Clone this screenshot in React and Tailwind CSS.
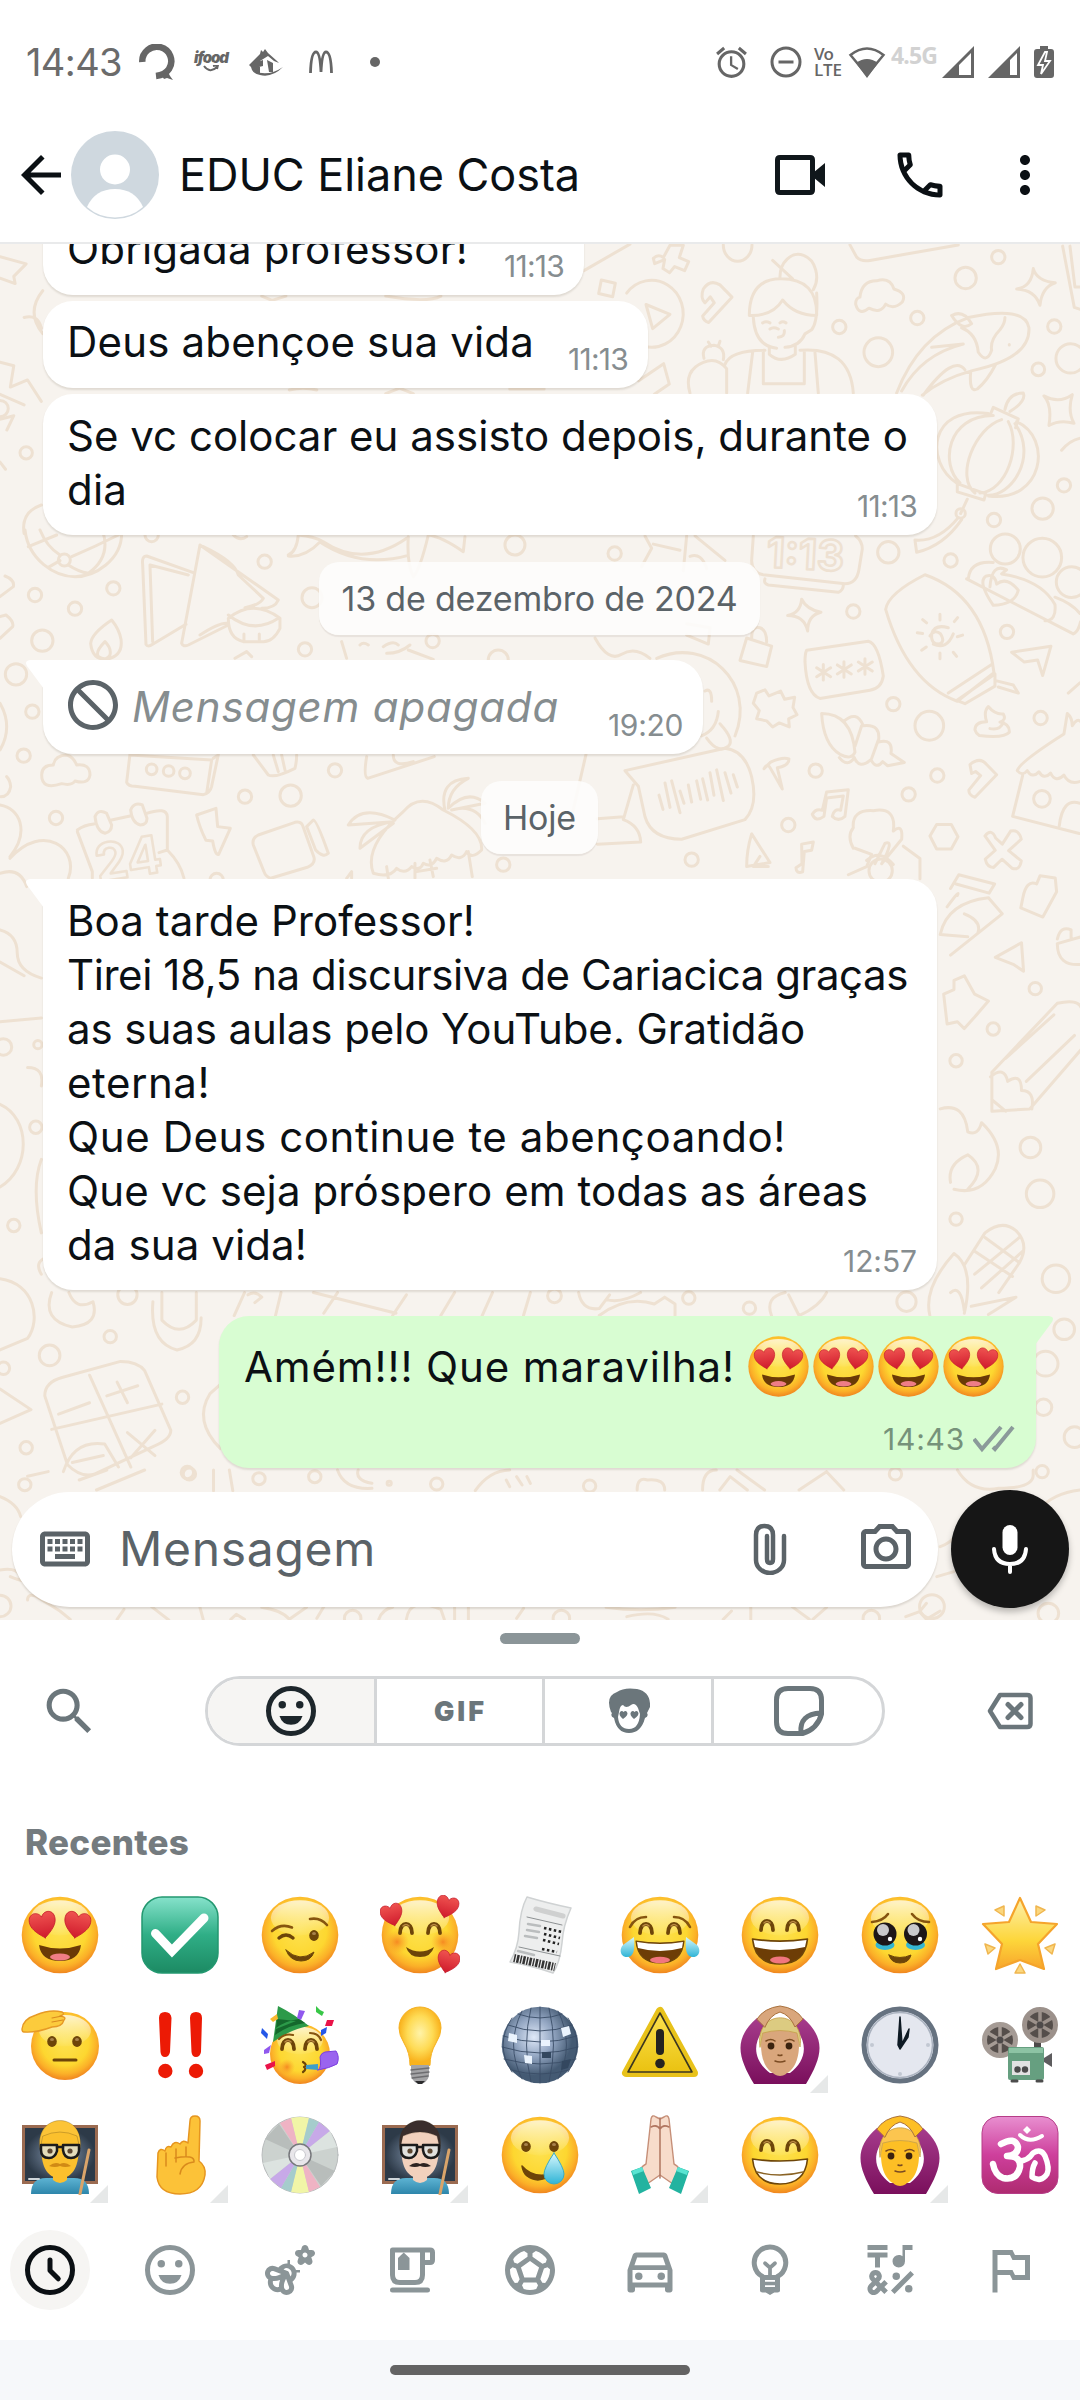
import React, { useLayoutEffect, useRef } from "react";
import {
  MdArrowBack, MdMoreVert, MdOutlineLocalPhone, MdBlock, MdOutlineKeyboard, MdOutlinePhotoCamera,
  MdSearch, MdOutlineEmojiNature, MdOutlineEmojiFoodBeverage, MdOutlineSportsSoccer,
  MdOutlineDirectionsCar, MdOutlineEmojiSymbols, MdOutlinedFlag, MdAlarm,
} from "react-icons/md";

/* Text set to a given advance width by spreading its letters evenly. */
function Fit({ w, className = "", children }) {
  const ref = useRef(null);
  useLayoutEffect(() => {
    const el = ref.current;
    el.style.letterSpacing = "0px";
    const natural = el.getBoundingClientRect().width;
    const n = children.length;
    el.style.letterSpacing = (w - natural) / n + "px";
  }, [w, children]);
  return <span ref={ref} className={"inline-block whitespace-pre " + className}>{children}</span>;
}

/* ---------- Wallpaper ---------- */
const NS = "*:[vector-effect:non-scaling-stroke]";

function Dots({ list, flat = 1 }) {
  return list.map(([x, y, r], i) => <ellipse key={i} cx={x} cy={y} rx={r} ry={r * flat} />);
}

function Wallpaper() {
  return (
    <svg className="absolute inset-0 h-full w-full" viewBox="0 244 1080 1376" fill="none" stroke="#eee1d2" strokeWidth="3" strokeLinecap="round" strokeLinejoin="round">
      <g transform="translate(560 240) scale(.3333 .4082)" className={NS}>
        <path d="M72 75L210 10M280 45q15-12 30-2l20-30h40l-12 30 28 10-12 22-30-10-15 15-20-10 5-22-30 10zM490 12a43 40 0 0 0 86 0" />
        <path d="M124 98l42 8-8 33-42-8zM200 130a95 82 0 1 1 50 130M258 158l72 24-52 35zM430 120q20-25 50-10l36 30-70 62q-16-4-18-16l35-32-12-15-16 15q-15-12-5-34z" />
        <path d="M660 92a55 55 0 1 1 100 30M638 50l60 45M568 185q0-90 95-90 110 0 107 90-65 0-102-38-30 40-100 38zM580 190q5 70 70 75M735 230q-15 30-60 33M770 130q5 70-15 90l-20 10M608 203q10-5 22 0M660 203q8-5 18 0M630 218q10-6 25 0M655 238q20 0 18-16M628 260v20q35 25 78 0v-20M495 305q15-35 120-35M720 270q150-10 160 105M578 275l-15 100M765 275l10 100M610 275v77h123v-77" />
        <path d="M500 375v-60q-30-30-70-15-60 20-40 75M432 290q-10-30 30-32 35 5 28 35M445 250l8 10M480 248l-4 10M236 345l75-42 17 50-45 25" />
        <path d="M900 140q5-40 50-40 40-10 52 20 40 10 25 32-25 20-50 5-15 25-50 10-30 20-40-10 0-15 13-17zM1420 70q10 30 66 35-40 10-46 55-15-38-70-40 45-5 50-50zM870 12l20 30q15 12 40 8l265-38M1508 15l35 150 18 5M1530 15l15 100h15" />
        <path d="M1010 375q65-140 215-185 170-30 182 25 5 75-170 105-90 20-150 60M1025 370q60-90 185-115l-95 8M1090 380q90-100 125-62M1175 185q35-15 60 20-30 20-60-20zM1205 215q45 15 50 60 25 30 40-5-5-25 25-50 15-15 15-30M1232 325q-5 50 20 40 30-20 55-60M1348 256v1" />
        <path d="M1290 430l10-20 75 28-8 22M1335 415q10-40 55-40 10 20-40 45M1285 425c-180-20-190 120-95 170M1370 445c110 40 80 200-85 182M1300 430c-140 0-160 120-100 165M1325 440c-80 20-140 140-80 180M1345 445c40 60-5 170-85 175M1365 450c70 80-10 180-85 175M1192 597l85 25-5 15-80-20zM1222 635l-20 35M1195 680q-60 60-130 55l5 30q80-15 135-80M1452 382q45 20 85-3-15 40 5 70-40-10-75 5 10-50-15-72zM1505 515q25-25 58-30" />
        <path d="M245 800l30-45-20-30M280 745l80 15M370 810l10-85M405 725l90 60M390 775q35-10 50 30" />
        <path d="M580 725l-5 60q0 30 35 35l245 22q35 0 42-35l10-50q0-20-20-32M615 830q-5 12 10 15l210 18q15-5 15-18M725 880q15 25 58 32-40 8-40 46-10-38-60-38 38-5 42-40zM560 975l75 20-15 50-80-15zM575 975q0-30 25-25 20 5 20 35" />
        <path d="M1095 820q-110 45-118 85 65 180 215 225l110-70q-30-190-207-240zM1165 1110l130-70M1190 1128l115-65v30l-90 43zM1310 1080l50 10 15 20-60-15M1290 850q5-60 50-42l-15 10q120 15 160 75 5 40-30 40M1225 830q5-45 75-40M1220 830l320 135q15-5 22-30M1485 875q50 15 75 40M1300 895q-50-60-20-72 25-5 30 20 30-20 65 15-10 35-75 37zM1355 1010l118-15-25 72-15-38-40 5z" />
        <path d="M740 1005l185-22q30 5 45 85-5 30-40 35l-150 20q-40-10-45-90 0-20 5-28zM790 1040v38M770 1048l42 22M812 1048l-42 22M852 1033v38M832 1041l42 22M874 1041l-42 22M915 1026v38M895 1034l42 22M937 1034l-42 22" />
        <path d="M1110 970q15-18 32-5 15 20-5 25-25 0-22-25 10-25 50-15M1120 990q40 15 60-25M1140 917v14M1140 1012v14M1072 962l16 2M1192 972l16-4M1085 1005l14-8M1183 935l10-10M1088 930l12 8M1180 1010l10 10" />
        <path d="M290 1025c150-55 300 60 235 190M105 975q40 60 80 40 40-20 85 10M380 940l70 10-5 40-65-22M435 1105q20-10 20 25M475 1155q-5 45-50 60M480 1185q45 40 25 55-30 20-65-20" />
        <path d="M590 1110l25-8 12 15 35-12 12 20 30-5-5 25 12 18-25 10 2 20-30-10-20 10-18-15-30-5 8-20-18-18z" />
        <path d="M785 1160q90 0 100 95-10 20-45 5-50-25-55-100zM850 1180q40-30 60 10 55-5 45 40 45-10 38 28l40 22-50 8-15-10q-20 20-35-5-35 25-50-5-20 25-45 0M905 1190l-20 50M955 1225l-20 45" />
        <path d="M195 1300l300-55q60 5 80 70 20 70-20 105l-190 48q-90 0-110-55l-20-75zM297 1360l12 35M315 1330l15 60M335 1325l25 78M360 1350l12 30M385 1335l10 42M410 1325l12 45M428 1320l15 52M450 1305l12 55M470 1298l20 75M495 1305l18 50M520 1310l12 30M78 1260l-45 160M220 1335l-30 85q50 15 52 55l-130 5M112 1418l78-5" />
        <path d="M612 1295q10-15 20 0l35 50-15-52q35-5 35-22-20-5-55 8zM800 1352l65-5-10 65q-20 15-38 0 5-20 25-15l8-35-50 5-8 45q-25 15-35-5 10-15 30-10zM725 1480l35-5-5 20-22 3-5 50q-20 5-20-10l18-10z" />
        <path d="M575 1455q-15 40-15 80l70-10-55-70M600 1510l-20 25h45M880 1490q-20-30 0-50-5-45 60-42 70-10 60 50 30-20 25 20l-60 60q40-60 10-50l-30 50M920 1520q40-30 80 10M885 1490l50 15-15 30-55 20M1030 1485l50 30v50" />
        <path d="M1110 1460l20-28h44l20 30-20 30h-44zM1275 1460q20-20 32 5l20 15 25-32q25-5 32 20l-38 28 38 25q-5 25-28 18l-30-22-25 20q-20 0-25-20l30-22zM1245 1200q0-20 35-20-10-25 5-37 20 20 45 18 10 15-10 20 30 5 28 25-15 15-90 8-10-5-13-14zM1290 1197q30 5 40-15M1525 1110l35-25" />
        <path d="M1372 1300q5-20 140-90l10-50q15 10 15 30 15-20 25-10M1372 1300q15 15 30 0 15 20 35 3 15 20 35 3 15 25 40 5 15 25 50 15M1388 1312l-30 100 200 42M1498 1435q10-70 62-55M1230 1285q30-20 50 0l30 25-65 55q-20-5-18-18l35-35-15-10-12 5z" />
        <Dots flat={0.82} list={[[1217, 93, 32], [1315, 42, 20], [1072, 191, 20], [838, 213, 20], [955, 275, 43], [1483, 212, 20], [1435, 317, 19], [1532, 290, 44], [1512, 601, 20], [1448, 658, 32], [1302, 686, 20], [1202, 670, 14], [1172, 785, 20], [1336, 757, 45], [1447, 778, 58], [1535, 838, 46], [985, 765, 32], [880, 910, 20], [164, 768, 20], [1341, 960, 20], [1442, 1171, 20], [1000, 1137, 20], [1108, 1190, 43], [767, 1300, 20], [1132, 1312, 20], [1046, 1358, 20], [1446, 1369, 25], [685, 1433, 20], [395, 1518, 20], [962, 1545, 35]]} />
      </g>
      <text x="766" y="567" fontFamily="Inter" fontWeight="700" fontSize="42" strokeWidth="2.5" transform="rotate(3 766 567)">1:13</text>

      <g transform="translate(0 530) scale(.3333)" className={NS}>
        <path d="M75 0c10 90 90 140 150 140s140-50 140-130M85 50L170 15M120 0q20 50 60 75M145 112l35-20M215 80q70-30 140-65M205 105q30 20 60 25 70-50 42-130M0 200l40-30q5-20-25-32M0 260l18-5q25 20 20 35L0 325" />
        <path d="M580 128L440 78q-15 0-12 25l10 240q5 10 20 0l100-60M565 135l-115-30 8 230M600 45L545 340q5 12 20 5l120-60M600 45l235 165q-10 25-50 25M610 50q95 45 105 85l75 70q-10 20-55 28M600 315q60-40 85-35M685 265q75-60 155 0v30q-20 40-50 40h-60q-45-10-45-70zM685 255q75 60 150 10M732 312v20M778 312v20" />
        <path d="M335 270q-60 40-63 70 5 50 48 48 50-10 43-60-5-30-28-58zM315 335q-30 30-20 45 25 15 35-5 5-20-15-40zM865 75q25-10 30-60 50 5 75 20 120 80 250-10M865 78q50 5 95-42 120 80 265 40M1225 20q-5 80 15 120 20-20 45-125 40 5 105 50l5-45M705 385l35-20 15 15M1040 385l-15-50M1080 345q10-10 25 0M1150 350q30-20 45-5M1160 370q40 0 70-25M1225 360l75 28" />
        <path d="M125 735q0-30 35-30 5-30 40-30 20 5 30 30 40-5 40 30-5 30-45 18-10 15-40 8-60 20-60-26zM390 672l-10 85q5 12 25 12l205 25q20-5 25-25l20-95M390 675l245 15-15 100M640 685l15-10M760 675l45 60q20 10 80-20 5-20 5-40M820 675l15 50M845 675l10 45M1100 680q-10 60 3 65l200-65M1180 675q0 40 60 20" />
        <path d="M232 900q20-15 50-18M335 870l55-12M440 850q60-20 62 10v100q40 40 50 85M232 905l45 120v20M502 960l-25 8M285 860q10-25 35-10l15 35q0 20-20 25-25-5-30-50zM392 840q10-25 35-15l14 40q0 20-20 20-25-5-29-45zM590 855l58-20 5 55 38 5-35 78q-10 5-18-40l-20-2q-20-40-28-76z" />
        <path d="M775 915l110-38q20-5 25 15l32 90q5 20-20 30l-110 33q-15-5-20-20l-32-80q-5-20 15-30zM920 890l20-20q10 0 45 100-15 15-38-10zM1120 1030q-30-80 90-185 50-60 120-5 120 60 115 120-30 30-45 5-15 30-45 10-15 30-45 10-15 30-40 15-10 25-35 10-20 25-45 5-20 30-70 15zM1185 870q-100-50-140 15l135-10q-100 15-100 80l100-75M1335 840q-20-90 70-95-60 30-60 90 60-60 110-15l-100 20q70-20 100 40M1160 1010l5 35M1245 1000v45M1290 990l10 50M1405 965l12 75M1250 1025l60-10" />
        <path d="M0 825c60 10 90 80 30 155M30 985c100-110 210-30 175 60M0 1030q60-20 80 40M20 740q10 10 12 30-5 30-30 30M700 15q20 20 40 5M0 520q40 70 0 140M1040 1045l15-20v20" />
        <Dots list={[[105, 195, 20], [225, 236, 20], [340, 175, 20], [127, 332, 32], [193, 90, 18], [794, 95, 20], [936, 203, 30], [915, 358, 20], [48, 433, 32], [97, 545, 20], [71, 677, 20], [168, 864, 20], [455, 718, 16], [506, 723, 16], [555, 730, 16], [872, 797, 32], [735, 800, 20], [1005, 721, 20], [1298, 333, 20], [1510, 1004, 20], [455, 15, 20], [650, 1050, 20], [1545, 45, 30], [1495, 390, 30]]} />
      </g>
      <text x="98" y="882" fontFamily="Inter" fontWeight="700" fontSize="52" strokeWidth="2.5" transform="rotate(-9 98 882)">24</text>

      {/* upper left edge */}
      <g transform="translate(0 230) scale(.6888 .3571)" className={NS}>
        <path d="M0 75l38 20-18 35 2 20-22-15M62 170q-25 60 0 120M35 245q20-10 25 30M0 370l20 10-5 60 25-20 20 60M0 460l35 30M0 530l20-10-10 40M60 770q-30 20-25 80M0 650l8 20M380 185l15 12 20-12M560 185q60 20 80 0" />
        <path d="M740 445h50M420 448q20-10 40 0M560 458l20-15 20 15" />
        <Dots flat={1.9} list={[[38, 624, 9], [0, 500, 12]]} />
      </g>

      {/* margins round the long message */}
      <g transform="translate(0 760) scale(.6888 .4591)" className={NS}>
        <path d="M0 370q25 10 25 50t35 55M0 440l35 30M0 570l60-8M40 670q25 0 20 40M0 750c45 30 45 140 0 180M60 870q-15 60 0 160M65 1085q-15 10-5 35M0 1130c50 10 60 90 40 130l-40 25M75 1160q-15 60 30 75 40-5 30-55-25 20-35-20M222 1180q-5 90 35 105 35-10 35-70M235 1160v60q25 40 50 0v-60M0 1370l45 45-45 30" />
        <path d="M90 1345l85-35q25 0 35 20l38 130q0 20-25 35l-85 60q-20 10-40-20l-33-150q0-30 25-40zM75 1458l160-55M130 1340l60 200M155 1385l45-22M170 1355l15 45M85 1425l45-25M185 1465l40 50M225 1460l-35 60M92 1550q15-70 60-60l20 50M105 1530l45-15" />
        <path d="M340 1210l15-50M400 1210l8-50M455 1160l120 45M470 1205l20-45M570 1210l20-45M640 1210l20-50M700 1210l15-50M760 1210l10-50M360 1165q10-10 20 5l-10 12M840 1160q5 40 30 35l15-30M880 1175q20 10 50-15M870 1210q40-45 80-25l15-15 15 15v25M1120 1210q-10-40 20-50M1145 1165l15 45q30-20 40-50" />
        <path d="M1380 280l12-30 52 20-8 20-48-20M1375 320q20-40 15-25M1435 300l20 35-75 90M1435 300q-60 10-70 80l40 5M1400 335q25 15 20 40M1485 300q5-40 20-30l5-18 22 5 2 30-20 55-32-20zM1445 430l38-32 3 62-15-15zM1370 510l15-10v-20l15-10 15 40 20 15-20 35-15 25-10-15-15 5z" />
        <path d="M1535 390q5-30 20-20v20M1535 400l35-15M1535 400q0 50 35 45M1440 680l95-150q30-10 35 10M1440 680v85l55-5 75-130M1460 650l70-95M1490 700l70-100M1438 690q20-25 25 10 20-20 20 20 20 0 15 40M1440 740l20 25M1365 760q35-15 40 50 15 10 20-20 35 50 20 100-20 60-60 45M1380 920q-5-40 25-60 30 30 0 75" />
        <path d="M1350 1210q-10-60 35-135 30 30 15 130M1380 1160q15-20 20 40M1410 1190l65-20-40 38M1400 1100l30-70q25-30 45-5 20 30 5 70l-30 65M1415 1070l55 55M1430 1040l50 55M1480 1040l-65 80M1485 1070l-60 80" />
        <path d="M320 1500q-40-60-15-120l15-20M40 1560l30-10" />
        <Dots flat={1.5} list={[[55, 620, 6], [5, 625, 12], [52, 800, 9], [20, 1014, 9], [160, 1256, 9], [72, 1297, 15], [265, 1388, 9], [38, 1498, 9], [185, 1165, 14], [805, 1167, 10], [1000, 1172, 9], [1088, 1194, 9], [1316, 1180, 14], [1533, 1130, 20], [1545, 1240, 15], [1518, 1315, 18], [1515, 1410, 12], [1560, 1475, 15], [1510, 945, 20], [1496, 844, 15], [1388, 655, 9], [1388, 1000, 9], [1442, 586, 9], [1503, 498, 9], [272, 1552, 9], [5, 1325, 9], [1513, 1550, 9]]} />
      </g>

      {/* strip round the composer */}
      <g transform="translate(0 1470) scale(.6888 .3333)" className={NS}>
        <path d="M115 30L155 0M140 60l70-60M310 0v62M333 0l5 62M490 0q10 60 50 55M520 0q-5 30 20 40M690 62q20-60 50-62M735 30l5 20M750 20l8 25M765 20l5 20M925 60q0-40 15-30 25-5 25 30M1020 60q0-60 20-60M1045 60l15-40 25 40M1070 0l40 60M1160 60l40-55 25 55M1390 0q20 70 60 55 50 0 50-40V0M1568 60q-40 10-60 60M0 80q25 20 30 60M0 300q30-10 30 30M15 320q10 10 25 15M1360 320l25-15M1365 230q25-20 25-60" />
        <path d="M40 390q0-20 12-12l35 45 15 25M170 448l10-30M220 410l25 40M290 410l5 38M335 448l8-15 12 15M380 412q30 10 40 36l25-36M460 445l10-35M550 448q5-30 20-36M590 448q5-70 50-30l5 30M660 412v36M680 412v36M750 445l10-30M880 412q50 15 100 0M910 440q40-20 60 8M1050 448l12-25M1090 412v36M1150 410l25 38M1200 412l-20 36M1315 440l20-15 10 23 20-25M1335 425l10-25" />
        <Dots flat={2} list={[[36, 44, 9], [0, 408, 16], [275, 12, 9], [376, 26, 9], [457, 20, 9], [634, 42, 9], [856, 48, 9], [1300, 12, 9], [565, 40, 3], [1353, 410, 18], [1522, 430, 15], [512, 445, 12], [815, 445, 12], [1265, 445, 12]]} />
      </g>
    </svg>
  );
}

/* ---------- Emoji artwork ---------- */
function EmojiDefs() {
  return (
    <svg className="absolute h-0 w-0">
      <defs>
        <radialGradient id="face" cx=".5" cy=".44" r=".56">
          <stop offset="0" stopColor="#fde250" /><stop offset=".62" stopColor="#fdd730" />
          <stop offset=".84" stopColor="#fbb028" /><stop offset="1" stopColor="#f0861f" />
        </radialGradient>
        <linearGradient id="shine" x2="0" y2="1"><stop offset="0" stopColor="#fff" stopOpacity=".75" /><stop offset="1" stopColor="#fff" stopOpacity=".05" /></linearGradient>
        <linearGradient id="red" x2="0" y2="1"><stop offset="0" stopColor="#ef5350" /><stop offset="1" stopColor="#cf1a2c" /></linearGradient>
        <linearGradient id="green" x2="0" y2="1"><stop offset="0" stopColor="#86e2cb" /><stop offset=".5" stopColor="#2fae86" /><stop offset="1" stopColor="#1c8a63" /></linearGradient>
        <linearGradient id="pink" x2="0" y2="1"><stop offset="0" stopColor="#e88fd0" /><stop offset=".5" stopColor="#ce3f9c" /><stop offset="1" stopColor="#ae2b70" /></linearGradient>
        <linearGradient id="tear" x2="0" y2="1"><stop offset="0" stopColor="#d8f8fd" /><stop offset="1" stopColor="#2fb4d6" /></linearGradient>
        <linearGradient id="gold" x2="0" y2="1"><stop offset="0" stopColor="#fdf0ae" /><stop offset=".6" stopColor="#fdd63a" /><stop offset="1" stopColor="#f8a52c" /></linearGradient>
        <linearGradient id="yellow" x2="0" y2="1"><stop offset="0" stopColor="#fbe14d" /><stop offset="1" stopColor="#eac211" /></linearGradient>
        <linearGradient id="purple" x2="0" y2="1"><stop offset="0" stopColor="#a63c8c" /><stop offset="1" stopColor="#7a0f5c" /></linearGradient>
        <radialGradient id="blush"><stop offset="0" stopColor="#f57c1f" stopOpacity=".85" /><stop offset="1" stopColor="#f9a12a" stopOpacity="0" /></radialGradient>
        <radialGradient id="bulb" cx=".5" cy=".45"><stop offset="0" stopColor="#fff3a8" /><stop offset=".6" stopColor="#fedb55" /><stop offset="1" stopColor="#f9b31e" /></radialGradient>
        <radialGradient id="board"><stop offset="0" stopColor="#8a9db6" /><stop offset="1" stopColor="#2d3a48" /></radialGradient>
        <linearGradient id="shirt" x2="0" y2="1"><stop offset="0" stopColor="#5db3d3" /><stop offset="1" stopColor="#2d86ab" /></linearGradient>
        <radialGradient id="ball" cx=".42" cy=".4"><stop offset="0" stopColor="#dfe9f8" /><stop offset=".5" stopColor="#93a6c2" /><stop offset="1" stopColor="#445a73" /></radialGradient>
      </defs>
    </svg>
  );
}
const Svg = ({ size = "h-20 w-20", children }) => <svg viewBox="0 0 80 80" className={size + " block shrink-0"} fill="none" strokeLinecap="round" strokeLinejoin="round">{children}</svg>;
const Face = ({ cx = 40, cy = 40, r = 38.3 }) => (
  <>
    <circle cx={cx} cy={cy} r={r} fill="url(#face)" />
    <ellipse cx={cx} cy={cy - r * 0.45} rx={r * 0.76} ry={r * 0.46} fill="url(#shine)" />
  </>
);
const Heart = ({ x, y, s = 1, rot = 0 }) => (
  <path transform={`translate(${x} ${y}) rotate(${rot}) scale(${s})`} d="M0 13C-9 6-13 1-13-5c0-9 10-10 13-3 3-7 13-6 13 3 0 6-4 11-13 18z" fill="url(#red)" stroke="#c41d2b" strokeWidth=".8" />
);
const Arch = ({ x, y }) => (
  <><path d={`M${x - 6} ${y + 4}c0-12 12-12 12 0`} stroke="#6d4509" strokeWidth="3.8" /><path d={`M${x - 3} ${y - 3}q3-3 6 0`} stroke="#b98a44" strokeWidth="1.6" /></>
);
const Eye = ({ x, y }) => <><ellipse cx={x} cy={y} rx="4.8" ry="5.4" fill="#6d4509" /><ellipse cx={x} cy={y - 2} rx="2" ry="1.6" fill="#a8824d" /></>;
const Grin = ({ teeth = false }) => (
  <>
    <path d="M12.5 44q27.5 4 55 0Q65 69 40 69T12.5 44z" fill={teeth ? "#fff" : "#6d3d06"} stroke="#6d4509" strokeWidth="1.6" />
    {teeth ? <path d="M17 57q23 6 46 0" stroke="#8a6325" strokeWidth="1.5" /> : <><path d="M13.5 45q26.500 4 53 0l-1.500 7q-25 6-50 0z" fill="#fff" /><ellipse cx="40" cy="65" rx="10" ry="3.500" fill="#f1767f" /></>}
  </>
);

const HeartEyes = ({ size }) => (
  <Svg size={size}><Face /><Heart x="23" y="30" rot="-10" /><Heart x="57" y="30" rot="10" />
    <path d="M19 50q21 7 42 0-2 16-21 16T19 50z" fill="#6a3a06" /><ellipse cx="40" cy="62" rx="10" ry="3.5" fill="#ee7d86" /></Svg>
);
const Ok = ({ skin, hair }) => (
  <Svg>
    <path d="M17 13C-7 34-2 52 14 79h52C82 52 87 34 63 13l-9 9c16 17 11 35-4 46H30C15 57 10 39 26 22z" fill="url(#purple)" />
    <path d="M34 60h12v9q-6 4-12 0z" fill={skin} />
    <path d="M21 40c0-36 38-36 38 0 0 18-8 30-19 30S21 58 21 40z" fill={skin} />
    <path d="M20 42C14 3 66 3 60 42l-3-14q-17-5-34 0z" fill={hair} stroke="#c5a04a" strokeWidth=".8" />
    <path d="M17 14Q24 3 40 1q16 2 23 13l-8 8Q50 10 40 7q-10 3-15 15z" fill={skin} stroke="#a9713d" strokeWidth="1" />
    <circle cx="31" cy="41" r="3.400" fill="#3b230f" /><circle cx="49" cy="41" r="3.400" fill="#3b230f" />
    <path d="M26 36q5-3 9 0M45 36q5-3 9 0M35 56q5 2 10 0M38 50q2 1 4 0" stroke="#7a4b22" strokeWidth="1.5" />
  </Svg>
);
const Teacher = ({ skin, hair, moustache }) => (
  <Svg>
    <rect x="2" y="10" width="76" height="59" fill="#9b6b51" /><rect x="5" y="13" width="70" height="53" fill="url(#board)" />
    <path d="M11 79q0-16 15-16h28q15 0 15 16z" fill="url(#shirt)" /><path d="M33 56h14v9q-7 6-14 0z" fill={skin} />
    <path d="M21 30c0-32 38-32 38 0 0 20-5 33-19 33S21 50 21 30z" fill={skin} />
    <path d="M20 34C14-4 66-4 60 34l-3-13q-17-8-34 0z" fill={hair} stroke="#3c2a12" strokeOpacity=".25" strokeWidth="1" />
    <path d="M21 30h16v6q-2 7-8 7-8 0-8-8zM43 30h16v6q-1 7-8 7-7 0-8-8z" fill="#dbe6ea" fillOpacity=".75" stroke="#1b1b1b" strokeWidth="2.500" /><path d="M37 32h6" stroke="#1b1b1b" strokeWidth="2.500" />
    <circle cx="30" cy="36" r="2.600" fill="#5c4630" /><circle cx="50" cy="36" r="2.600" fill="#5c4630" />
    <path d="M29 51q6-5 11-2 5-3 11 2-6 2-11 0-5 2-11 0z" fill={moustache} />
    <path d="M69 35L60 79" stroke="#d9a46a" strokeWidth="3" /><path d="M9 64h10" stroke="#cfd6da" strokeWidth="2" />
  </Svg>
);

const EMOJI = [
  <HeartEyes />,
  <Svg><rect x="2" y="2" width="76" height="76" rx="20" fill="url(#green)" stroke="#239870" strokeWidth="1.500" /><path d="M15.500 38.500L32 56 64 23" stroke="#fff" strokeWidth="9" strokeLinejoin="miter" /></Svg>,
  <Svg><Face /><path d="M12 36q9-8 20-3.500M50 24q10-2 17 6" stroke="#86550f" strokeWidth="2.600" /><path d="M19 43q7-6 14 0" stroke="#6d4509" strokeWidth="3.400" /><Eye x={54} y={40.5} /><path d="M26 55q14 13 28 2-3 9-13 9-11 0-15-11z" fill="#6d4509" stroke="#6d4509" strokeWidth="1" /></Svg>,
  <Svg><Face /><circle cx="17" cy="47" r="12" fill="url(#blush)" /><circle cx="63" cy="47" r="12" fill="url(#blush)" /><Arch x={26} y={34} /><Arch x={54} y={34} /><path d="M26 52q14 9 28 0-3 10-14 10T26 52z" fill="#6d4509" /><Heart x="12" y="20" s=".84" rot="-15" /><Heart x="67" y="12" s=".84" rot="15" /><Heart x="68" y="67" s=".84" rot="15" /></Svg>,
  <Svg><path d="M27 2q20 6 44 11-8 18-9 35-2 20-9 30-20-7-43-11 8-14 9-30 1-22 8-35z" fill="#edeeee" stroke="#cfd2d3" strokeWidth="1.500" /><path d="M36 14l27 7" stroke="#cfd0d0" strokeWidth="5" /><path d="M27 22l35 8M19 52l41 9" stroke="#8d9193" strokeWidth="1" /><path d="M28 29l12 2M27 35l12 2M25 41l12 2M18 56l16 4" stroke="#babdbe" strokeWidth="2.500" /><path d="M44 33l18 4M44 39l16 4M43 45l16 4M42 54l15 3" stroke="#222" strokeWidth="2.600" strokeDasharray="2.500 2.500" strokeLinecap="butt" /><path d="M14 63l41 9" stroke="#333" strokeWidth="8" strokeDasharray="1.500 1.200 2.500 1.200" strokeLinecap="butt" /></Svg>,
  <Svg><Face /><path d="M10 32q5-10 16-10M54 22q11 0 16 10" stroke="#86550f" strokeWidth="2.600" /><Arch x={26} y={34} /><Arch x={54} y={34} /><path d="M16 46q24 4 48 0-2 22-24 22T16 46z" fill="#6d3d06" stroke="#6d4509" strokeWidth="1.200" /><path d="M17 47q23 4 46 0l-1 6q-22 6-44 0z" fill="#fff" /><ellipse cx="40" cy="65" rx="10" ry="3.300" fill="#f1767f" /><path d="M14 42c1 12 0 20-7 20s-8-8-4-12zM66 42c-1 12 0 20 7 20s8-8 4-12z" fill="url(#tear)" /></Svg>,
  <Svg><Face /><Arch x={27} y={31} /><Arch x={53} y={31} /><Grin /></Svg>,
  <Svg><Face /><ellipse cx="25" cy="50" rx="9.500" ry="5" fill="#35b6d2" /><ellipse cx="55.500" cy="50" rx="9.500" ry="5" fill="#35b6d2" /><circle cx="25" cy="39" r="11.500" fill="#1d1718" /><circle cx="55.500" cy="39" r="11.500" fill="#1d1718" /><circle cx="23" cy="35" r="6" fill="#c9c9cb" /><circle cx="53.500" cy="35" r="6" fill="#c9c9cb" /><circle cx="30" cy="44" r="2.200" fill="#fff" /><circle cx="60" cy="44" r="2.200" fill="#fff" /><path d="M12 27q11-1 16-8M52 19q6 8 17 8" stroke="#86550f" strokeWidth="2.600" /><path d="M29 60q11 5 22 0-2 8-11 8t-11-8z" fill="#6d4509" stroke="#6d4509" /></Svg>,
  <Svg><path d="M40 3l11 24 26 2-19 20 6 25-24-9-24 9 6-25L3 29l26-2z" fill="url(#gold)" stroke="#f5a42c" strokeWidth="2.200" /><path d="M24 11v10l-9-6zM56 11v10l9-6zM5 49l10 4-7 6zM75 49l-10 4 7 6zM40 69l5 9H35z" fill="#fbd77e" stroke="#f0b64f" strokeWidth="1.500" /></Svg>,

  <Svg><Face cx={45} cy={41} r={34} /><path d="M2 24q1-10 14-14 14-6 26-3 4 2-2 4 7 1 4 4-2 7-12 7-16 6-28 5-2 0-2-3z" fill="#fccb3c" stroke="#e79a25" strokeWidth="1.400" /><path d="M32 13l10-2M32 17l11-2" stroke="#d98a1f" strokeWidth="1.200" /><Eye x={32} y={36.5} /><Eye x={57} y={36.5} /><path d="M34 55h22" stroke="#6d4509" strokeWidth="3" /></Svg>,
  <Svg><path d="M19 13q0-6 6-6t6.500 6l-1.500 34q-1 5-5 5t-4.500-5zM50 13q0-6 6-6t6 6l-1 34q-1 5-5 5t-4.500-5z" fill="#ec1a05" /><circle cx="25.300" cy="66" r="7.200" fill="#ec1a05" /><circle cx="56" cy="66" r="7.200" fill="#ec1a05" /></Svg>,
  <Svg><Face cx={40} cy={49} r={30} /><circle cx="27" cy="62" r="8" fill="url(#blush)" /><path d="M18 1q16 8 31 20-18 3-36 16z" fill="#2c9a49" /><path d="M17 14l19 2-20 8zM15 30q14-10 30-12l-6-4q-14 2-23 9z" fill="#14682c" /><Arch x={28} y={40} /><Arch x={51} y={40} /><path d="M19 34q6-6 14-4M50 28q8 0 11 7" stroke="#86550f" strokeWidth="2.200" /><path d="M43 57q5 3 1 5 3 2-1 5" stroke="#6d4509" strokeWidth="2.200" /><path d="M46 60l12-1v6l-12-1z" fill="#3d9ec9" /><path d="M58 65q4-2 2-13 1-4 5-5l11-1q4 6 1 13-7 4-19 6z" fill="#9a63ef" stroke="#7b3fe0" /><path d="M39 5l6 1-4 9-4-2z" fill="#9058ee" /><path d="M56 1l4 4 4 2-2 4-6-4z" fill="#38c747" /><path d="M67 15h7l-2 6h-7z" fill="#ea1349" /><path d="M61 25l6-3-1 6-5 3z" fill="#2457e8" /><path d="M2 23l6 6-1 5-6-6z" fill="#2457e8" /><path d="M4 45l7-5-2 8-5 1z" fill="#9058ee" /><path d="M5 60l10-4v5l-8 4z" fill="#ea1349" /><path d="M10 14l7-5 1 5-5 3z" fill="#f9b930" /></Svg>,
  <Svg><path d="M30 60q0-12-6-22-5-8-5-15a21 21 0 0 1 42 0q0 7-5 15-6 10-6 22z" fill="url(#bulb)" stroke="#f5b01f" strokeWidth="1" /><path d="M31 60h18v11q-2 7-9 8-7-1-9-8z" fill="#a4a4a6" /><path d="M31 65l18-2M31 69l18-2M32 73l16-2" stroke="#6d6d70" strokeWidth="1.300" /><path d="M35 76h10l-3 3h-4z" fill="#2b2b2d" /></Svg>,
  <Svg><circle cx="40" cy="40" r="38.300" fill="url(#ball)" /><g stroke="#3a4d66" strokeWidth=".9"><path d="M40 2v76M22 6Q5 40 22 74M58 6q17 34 0 68M31 3Q22 40 31 77M49 3q9 37 0 74M12 13q-18 27 0 54M68 13q18 27 0 54M18 9q22 8 44 0M8 20q32 12 64 0M3 31q37 12 74 0M2 42q38 12 76 0M4 54q36 10 72 0M11 65q29 8 58 0" /></g><path d="M9 28l8 2v8l-9-2zM24 50l8 1v8l-7-1zM41 35h9v6h-9zM61 23l8-2 2 8-8 3z" fill="#eaf3fd" /><path d="M42 47h9v6h-9zM62 56l9-2-3 9-7 2z" fill="#33475f" /></Svg>,
  <Svg><path d="M40 6L6 68h68z" fill="#f0cd1d" stroke="#e8c21a" strokeWidth="8" /><path d="M40 8L8 67h64z" fill="url(#yellow)" stroke="#3b3620" strokeWidth="1.600" /><path d="M40 28v18" stroke="#242320" strokeWidth="8" /><circle cx="40" cy="58.500" r="4.800" fill="#242320" /></Svg>,
  <Ok skin="#d9a67c" hair="#dccb81" />,
  <Svg><circle cx="40" cy="40" r="36" fill="#e4e7ef" stroke="#667280" strokeWidth="5" /><circle cx="40" cy="40" r="32.500" stroke="#aab2bf" strokeWidth="1.500" /><path d="M40 12l2 27 7-15-1 8-8 12-2-4z" fill="#0e1a24" stroke="#0e1a24" strokeWidth="1.500" /><circle cx="12" cy="40" r="2" fill="#c2c8d2" /><circle cx="68" cy="40" r="2" fill="#c2c8d2" /><circle cx="40" cy="69" r="2" fill="#c2c8d2" /></Svg>,
  <Svg><path d="M54 36h7v9h-7z" fill="#4d4a4a" /><circle cx="60" cy="20" r="15.500" fill="#554e4b" stroke="#9c918b" strokeWidth="5" /><path d="M60 6v28M48 13l24 14M48 27l24-14" stroke="#9c918b" strokeWidth="3.500" /><circle cx="60" cy="20" r="3.500" fill="#4e4a4a" /><circle cx="20" cy="35" r="15.500" fill="#554e4b" stroke="#a59b95" strokeWidth="5" /><path d="M20 21v28M8 28l24 14M8 42l24-14" stroke="#a59b95" strokeWidth="3.500" /><circle cx="20" cy="35" r="3.500" fill="#4e4a4a" /><path d="M64 53l8-5v14l-8-5z" fill="#5d5c5e" /><rect x="28" y="42" width="36" height="33" rx="2" fill="#669f80" /><path d="M29 43h34v5H29z" fill="#8dc3a4" /><path d="M32 76h5M57 76h5" stroke="#4c4c4c" strokeWidth="3" /><rect x="32" y="56" width="18" height="14" fill="#e2e2e2" /><circle cx="37.500" cy="64.500" r="3.200" fill="#4b4b4b" /><circle cx="45" cy="64.500" r="3.200" fill="#4b4b4b" /></Svg>,

  <Teacher skin="#fbc02d" hair="#fcc437" moustache="#d08a15" />,
  <Svg><path d="M50 6q0-5 5-5t5 5l-1 40q7 5 6 14-3 19-25 19-21 0-23-17l1-24q2-6 7-2 1-6 6-4 3-7 9-3 3-5 8-1z" fill="#fcc238" stroke="#e6951f" strokeWidth="1.500" /><path d="M26 38v13M36 34v13M46 32v9M35 43q20-4 19 4-12 1-14 12" stroke="#d98a1c" strokeWidth="1.500" /></Svg>,
  <Svg><circle cx="40" cy="40" r="38" fill="#ccd2cf" stroke="#b9bcbd" strokeWidth="1" /><g><path d="M40 40L31 3a38 38 0 0 1 18 0zM40 40l-9 37a38 38 0 0 0 18 0z" fill="#f1f5a7" /><path d="M40 40L20 8l11-5zM40 40l20 32-11 5z" fill="#efb3c4" /><path d="M40 40L49 3l10 4zM40 40l-9 37-10-4z" fill="#a5cccc" /><path d="M40 40L59 7l11 9zM40 40L21 73l-11-9z" fill="#c7a9e8" /><path d="M40 40L5 24 19 9zM40 40l35 16-14 15z" fill="#b8bdbb" /><path d="M40 40L70 16l7 16zM40 40L10 64 3 48z" fill="#dce3e0" /></g><circle cx="40" cy="40" r="11" fill="#e8e6ea" stroke="#77787c" strokeWidth="1.500" /><circle cx="40" cy="40" r="5.500" fill="#fff" stroke="#c9c9cf" /></Svg>,
  <Teacher skin="#f2d1bd" hair="#3a2e2c" moustache="#2d2321" />,
  <Svg><Face /><Eye x={26} y={31.5} /><Eye x={54} y={31.5} /><path d="M22 51q12 14 32 7-15 12-27 3-4-3-5-10z" fill="#6d4509" stroke="#6d4509" strokeWidth="1.500" /><path d="M54 38q10 15 10 21a10 10 0 0 1-20 0q0-6 10-21z" fill="url(#tear)" stroke="#3aabc4" strokeWidth="1" /></Svg>,
  <Svg><path d="M31 4q1-5 5-2l4 2 4-2q4-3 5 2l5 45q6 3 9 12l-10 8-13-9-13 9-10-8q3-9 9-12z" fill="#f7dccb" stroke="#c68f78" strokeWidth="1.400" /><path d="M40 3v60M31 12q6-3 9 2 3-5 9-2" stroke="#b07560" strokeWidth="1.500" /><path d="M11 56l11-4 9 21-12 6zM69 56l-11-4-9 21 12 6z" fill="#22b3a0" /><path d="M12 56l10-4 2 4-11 4zM68 56l-10-4-2 4 11 4z" fill="#58e4d2" /></Svg>,
  <Svg><Face /><Arch x={27} y={31} /><Arch x={53} y={31} /><Grin teeth /></Svg>,
  <Ok skin="#fdbf25" hair="#fcc54f" />,
  <Svg><rect x="2" y="1.500" width="76" height="77" rx="16" fill="url(#pink)" stroke="#b63d88" strokeWidth="1" /><g stroke="#fff"><path d="M21 29q14-8 17 3 0 8-11 9 14 0 13 11-3 14-17 11-8-3-10-14" strokeWidth="6.500" /><path d="M39 46q9 0 14-8 8-5 12 3 5 12 2 18-6 9-15 3 0-9 3-14" strokeWidth="5.500" /><path d="M40 20q9 9 22 1" strokeWidth="4" /></g><path d="M47 11l4 4-4 4-4-4z" fill="#fff" /></Svg>,
];
const WITH_SKIN_TONES = [15, 18, 19, 21, 23, 25];

/* ---------- Status bar ---------- */
function StatusBar() {
  return (
    <div className="flex h-[124px] items-center justify-between pl-[26px] pr-[26px] text-[#666]">
      <div className="flex items-center">
        <div className="w-[113px] text-[38px] leading-[50px] text-[#6b6b6b]"><Fit w={96}>14:43</Fit></div>
        <svg className="h-9 w-9" viewBox="0 0 36 36" fill="none" stroke="#666" strokeWidth="6.500"><path d="M3.300 18A14.500 14.500 0 1 1 30 25q-4 6-13 7" /><path d="M29 26q0 4 5 10l-6-2-3 1-2-3z" fill="#666" stroke="none" /></svg>
        <div className="ml-[18px] flex w-9 flex-col items-center">
          <Fit w={34} className="text-[15px] leading-[14px] font-black italic">ifood</Fit>
          <svg className="h-[8px] w-[22px]" viewBox="0 0 22 8" fill="none" stroke="#666" strokeWidth="2"><path d="M4 1q6 8 13 1M13 1l5-1-1 4" /></svg>
        </div>
        <svg className="ml-[19px] h-7 w-9" viewBox="0 0 36 28" fill="#666"><path d="M1 17L12 6l1-4 2 2 2-3 3 4 9 8 2 2-5-2-6-5-8 5v12H8l-4-3-1-3zM3 18l3-5v8zM19 12l6 3v9h-4zM10 14l5-2v6l-4 1z" /><path d="M4 22q15 8 31-3Q24 30 12 27q-6-1-8-5z" /></svg>
        <svg className="ml-[24px] h-6 w-[26px]" viewBox="0 0 26 24" fill="none" stroke="#666" strokeWidth="2.800"><path d="M2.500 23Q3 2 8 2q4 0 5 20Q14 2 18 2q5 0 5.500 21" /></svg>
        <div className="ml-[36px] h-2.5 w-2.5 rounded-full bg-[#666]" />
      </div>
      <div className="flex items-center">
        <MdAlarm size={37} />
        <svg className="ml-[20px] h-8 w-8" viewBox="0 0 32 32" fill="none" stroke="#666" strokeWidth="3"><circle cx="16" cy="16" r="14" /><path d="M8.500 16h15" /></svg>
        <div className="ml-[12px] flex w-7 flex-col items-start text-[17px] leading-[16px] font-semibold font-[Open_Sans,sans-serif]">
          <Fit w={19} className="h-4 leading-4">Vo</Fit>
          <Fit w={28} className="h-4 leading-4">LTE</Fit>
        </div>
        <svg className="ml-[6px] h-8 w-[38px]" viewBox="0 0 38 32"><path d="M2.500 9Q19-4 35.500 9L19 29z" fill="none" stroke="#666" strokeWidth="2.500" /><path d="M8 17q11-8 22 0L19 32z" fill="#666" /></svg>
        <div className="mb-[14px] ml-[5px] w-[46px] font-['Noto_Sans'] text-[23px] leading-5 font-bold text-[#d2d2d2]"><Fit w={46}>4.5G</Fit></div>
        <svg className="ml-[5px] h-8 w-8" viewBox="0 0 32 32" fill="#666"><path d="M32 0v32H0zM29 7L17 19v10h12z" fillRule="evenodd" /></svg>
        <svg className="ml-[14px] h-8 w-8" viewBox="0 0 32 32" fill="#666"><path d="M32 0v32H0zM29 7l-7 7v15h7z" fillRule="evenodd" /></svg>
        <svg className="ml-[14px] h-8 w-[20px]" viewBox="0 0 20 32"><path d="M6 0h8v3h3q3 0 3 3v23q0 3-3 3H3q-3 0-3-3V6q0-3 3-3h3z" fill="#666" /><path d="M11 6L4 19h5l-2 9 9-13h-5l2-9z" fill="#666" stroke="#fff" strokeWidth="1.800" /></svg>
      </div>
    </div>
  );
}

function Header() {
  return (
    <div className="flex h-[120px] items-start border-b-2 border-[#e9eaeb] pt-[7px] text-[#0b1014]">
      <MdArrowBack className="mt-[14px] ml-[11px]" size={60} />
      <svg className="h-[88px] w-[88px]" viewBox="0 0 88 88"><circle cx="44" cy="44" r="44" fill="#cfd8df" /><ellipse cx="44" cy="38.500" rx="15" ry="15" fill="#fff" /><path d="M16 76q8-18 28-18t28 18q-12 10.500-28 10.500T16 76z" fill="#fff" /></svg>
      <div className="mt-[17px] ml-[20px] w-[591px] text-[45px] leading-[54px]"><Fit w={401}>EDUC Eliane Costa</Fit></div>
      <svg className="mt-[14px] h-[60px] w-[60px]" viewBox="0 0 24 24"><path d="M4 4h12q2 0 2 2v4.500L22 7.200v9.600L18 13.500V18q0 2-2 2H4q-2 0-2-2V6q0-2 2-2zm0 2v12h12V6z" fill="#10171b" fillRule="evenodd" /></svg>
      <MdOutlineLocalPhone className="mt-[14px] ml-[60px]" size={60} />
      <MdMoreVert className="mt-[14px] ml-[45px]" size={60} />
    </div>
  );
}

/* ---------- Messages ---------- */
function Time({ w, children }) {
  return <div className="absolute right-[20px] bottom-[9px] text-[30px] leading-10 text-[#868d90]"><Fit w={w}>{children}</Fit></div>;
}
function Bubble({ className, tail, children }) {
  return (
    <div className={"relative ml-[43px] rounded-[30px] bg-white pl-[24px] shadow-[0_2px_2px_rgba(60,40,20,0.12)] " + (tail ? "rounded-tl-none " : "") + className}>
      {tail && <svg className="absolute top-0 left-[-17px] h-[30px] w-[18px]" viewBox="0 0 18 30"><path d="M18 0H4Q-2 1 1 6l17 23z" fill="#fff" /></svg>}
      {children}
    </div>
  );
}
const Line = ({ w, children }) => <div className="h-[54px] text-[42px] leading-[54px] text-[#0b1014]"><Fit w={w}>{children}</Fit></div>;
const Pill = ({ className, w, children }) => (
  <div className={"flex h-[73px] items-center justify-center self-center rounded-[20px] bg-[#fdfdfc]/90 text-[34px] text-[#5b6368] shadow-[0_2px_1px_rgba(60,40,20,0.08)] " + className}><Fit w={w}>{children}</Fit></div>
);

function Chat() {
  return (
    <div className="relative h-[1376px] overflow-hidden bg-[#f7f3ee]">
      <Wallpaper />
      <div className="relative mt-[-36px] flex flex-col items-start">
        <Bubble className="h-[87px] w-[541px] pt-[14px]"><Line w={401}>Obrigada professor!</Line><Time w={60}>11:13</Time></Bubble>
        <Bubble className="mt-[6px] h-[87px] w-[605px] pt-[14px]"><Line w={467}>Deus abençoe sua vida</Line><Time w={60}>11:13</Time></Bubble>
        <Bubble className="mt-[6px] h-[141px] w-[894px] pt-[15px]">
          <Line w={841}>Se vc colocar eu assisto depois, durante o</Line><Line w={60}>dia</Line><Time w={60}>11:13</Time>
        </Bubble>
        <Pill className="mt-[27px] mr-px w-[441px]" w={396}>13 de dezembro de 2024</Pill>
        <Bubble tail className="mt-[25px] flex h-[94px] w-[660px] pt-[20px]">
          <MdBlock className="mt-[-5px] -ml-[4px] shrink-0 -scale-x-100 text-[#5b6368]" size={60} />
          <div className="ml-[9px] text-[42px] leading-[54px] text-[#868d8f] italic"><Fit w={427}>Mensagem apagada</Fit></div>
          <Time w={75}>19:20</Time>
        </Bubble>
        <Pill className="mt-[27px] mr-px w-[117px]" w={73}>Hoje</Pill>
        <Bubble tail className="mt-[25px] h-[411px] w-[894px] pt-[15px]">
          <Line w={408}>Boa tarde Professor!</Line>
          <Line w={841}>Tirei 18,5 na discursiva de Cariacica graças</Line>
          <Line w={738}>as suas aulas pelo YouTube. Gratidão</Line>
          <Line w={143}>eterna!</Line>
          <Line w={719}>Que Deus continue te abençoando!</Line>
          <Line w={801}>Que vc seja próspero em todas as áreas</Line>
          <Line w={240}>da sua vida!</Line>
          <Time w={74}>12:57</Time>
        </Bubble>
        <div className="relative mt-[26px] mr-[44px] h-[152px] w-[817px] self-end rounded-[30px] rounded-tr-none bg-[#d8fdd2] pt-[19px] pl-[25px] shadow-[0_2px_2px_rgba(60,40,20,0.12)]">
          <svg className="absolute top-0 right-[-17px] h-[30px] w-[18px]" viewBox="0 0 18 30"><path d="M0 0h14q6 1 3 6L0 29z" fill="#d8fdd2" /></svg>
          <div className="flex items-start">
            <div className="mt-[5px] w-[503px]"><Line w={491}>Amém!!! Que maravilha!</Line></div>
            <div className="flex gap-[2px]">
              {[0, 1, 2, 3].map((i) => <HeartEyes key={i} size="h-[63px] w-[63px]" />)}
            </div>
          </div>
          <div className="absolute right-[21px] bottom-[9px] flex items-center text-[30px] leading-10 text-[#76927a]">
            <Fit w={82}>14:43</Fit>
            <svg className="ml-[8px] h-[28px] w-[42px]" viewBox="0 0 42 28" fill="none" stroke="#8b9a9a" strokeWidth="4"><path d="M1 14l8 10L28 2M20 22l2 2L40 2" /></svg>
          </div>
        </div>
      </div>

      <div className="relative mt-[22px] ml-[12px] flex items-center">
        <div className="flex h-[115px] w-[926px] items-center rounded-full bg-white text-[#5b6368] shadow-[0_2px_2px_rgba(60,40,20,0.14)]">
          <MdOutlineKeyboard className="ml-[23px]" size={60} />
          <div className="ml-[24px] w-[611px] text-[48px] leading-[58px]"><Fit w={257}>Mensagem</Fit></div>
          <svg className="ml-[22px] h-[52px] w-[36px]" viewBox="0 0 36 52" fill="none" stroke="#5b6368" strokeWidth="4.500" strokeLinecap="round"><path d="M32 13v24a14 13 0 0 1-28 0V12q0-9 8.500-9T21 12v24q0 4-3 4t-3-4V13" /></svg>
          <MdOutlinePhotoCamera className="ml-[68px]" size={60} />
        </div>
        <div className="ml-[13px] flex h-[118px] w-[118px] items-center justify-center rounded-full bg-[#161616] shadow-[0_4px_6px_rgba(0,0,0,0.25)]">
          <svg className="h-[50px] w-[38px]" viewBox="0 0 38 50" fill="none"><rect x="11.500" y="1" width="15" height="30" rx="7.500" fill="#fff" /><path d="M3 25q1 15 16 15t16-15M19 40v8" stroke="#fff" strokeWidth="4" strokeLinecap="round" /></svg>
        </div>
      </div>
    </div>
  );
}

/* ---------- Emoji keyboard ---------- */
const Smiley = ({ className }) => (
  <svg className={className} viewBox="0 0 24 24"><circle cx="12" cy="12" r="9" fill="none" stroke="currentColor" strokeWidth="2" /><circle cx="8.500" cy="9.500" r="1.500" fill="currentColor" /><circle cx="15.500" cy="9.500" r="1.500" fill="currentColor" /><path d="M7.400 14h9.200Q15.500 17.500 12 17.500T7.400 14z" fill="currentColor" /></svg>
);

function Keyboard() {
  const seg = "flex items-center justify-center";
  return (
    <div className="flex h-[720px] flex-col bg-white">
      <div className="mt-[13px] h-[11px] w-[80px] self-center rounded-full bg-[#8b9598]" />
      <div className="mt-[32px] flex items-center text-[#6b767b]">
        <MdSearch className="ml-[39px]" size={61} />
        <div className="ml-[105px] grid h-[70px] w-[680px] grid-cols-4 divide-x-3 divide-[#d4d6d8] overflow-hidden rounded-full border-3 border-[#d4d6d8]">
          <div className={seg + " bg-[#f6f5f3] text-[#1d262b]"}><Smiley className="h-[60px] w-[60px]" /></div>
          <div className={seg}>
            <svg className="h-[20px] w-[50px]" viewBox="0 0 50 20" fill="none" stroke="#6b767b" strokeWidth="4.500"><text x="0" y="19.500" textLength="50" lengthAdjust="spacing" fontFamily="Inter" fontWeight="900" fontSize="27" fill="#6b767b" stroke="none">GIF</text></svg>
          </div>
          <div className={seg}>
            <svg className="ml-[2px] h-[46px] w-[42px]" viewBox="0 0 42 46"><path d="M3 24Q-3 8 9 4 16-1 29 1q14 3 13 18l-3 6q2 3-2 5-4 15-16 15T6 30q-4-2-2-5z" fill="#6b767b" /><path d="M11 24q1-7 4-7 3 4 8 0 4-3 7 3l2 6q-1 15-11 15T10 29z" fill="#fff" /><path d="M15 31q-5-4-3-7 2-2 3.500 0 2-2 3.500 0 2 3-4 7zM26 31q-5-4-3-7 2-2 3.500 0 2-2 3.500 0 2 3-4 7z" fill="#6b767b" /></svg>
          </div>
          <div className={seg}>
            <svg className="ml-[2px] h-[52px] w-[52px]" viewBox="0 0 52 52" fill="none" stroke="#6b767b" strokeWidth="5" strokeLinejoin="round"><path d="M15 3.500h22q11.500 0 11.500 11.500v14q-4 15-19 19.500H15Q3.500 48.500 3.500 37V15Q3.500 3.500 15 3.500zM28 48q-2-19 20-20" /></svg>
          </div>
        </div>
        <svg className="ml-[102px] h-[38px] w-[46px]" viewBox="0 0 46 38" fill="none" stroke="#6b767b" strokeWidth="4.500" strokeLinejoin="round"><path d="M13 3h27q3.500 0 3.500 3v26q0 3-3.500 3H13L3 19z" /><path d="M21 12.500l13 13M34 12.500l-13 13" strokeLinecap="round" strokeWidth="5" /></svg>
      </div>
      <div className="mt-[73px] ml-[25px] h-[46px] text-[35px] leading-[46px] font-extrabold text-[#747b7f]"><Fit w={164}>Recentes</Fit></div>
      <div className="mt-[22px] ml-[12px] grid w-[1056px] grid-cols-9 gap-x-6 gap-y-[14px]">
        {EMOJI.map((e, i) => (
          <div key={i} className="relative flex h-24 w-24 items-center justify-center">
            {e}
            {WITH_SKIN_TONES.includes(i) && <div className="absolute right-0 bottom-0 h-[18px] w-[18px] bg-[#e6e8e8] [clip-path:polygon(100%_0,100%_100%,0_100%)]" />}
          </div>
        ))}
      </div>
      <div className="mt-[27px] ml-[10px] grid w-[1040px] grid-cols-[repeat(9,80px)] justify-between text-[#8b9598]">
        <div className="flex h-20 items-center justify-center rounded-full bg-[#f6f5f3]">
          <svg className="h-[60px] w-[60px]" viewBox="0 0 24 24" fill="none" stroke="#0b1014" strokeWidth="2" strokeLinecap="round" strokeLinejoin="round"><circle cx="12" cy="12" r="9" /><path d="M12 8v4.200l3.300 3.300" /></svg>
        </div>
        <div className="flex items-center justify-center"><Smiley className="h-[60px] w-[60px]" /></div>
        <div className="flex items-center justify-center"><MdOutlineEmojiNature size={60} /></div>
        <div className="flex items-center justify-center">
          <svg className="h-[60px] w-[60px]" viewBox="0 0 24 24" fill="none" stroke="currentColor" strokeWidth="2" strokeLinecap="round" strokeLinejoin="round"><path d="M5 4h15q1 0 1 1v3q0 1-1 1h-3M17 4v10q0 3-3 3H8q-3 0-3-3V4M5 20h14" /><path d="M9.500 5l2.300 2.200V12H7.200V7.200z" fill="currentColor" stroke="none" /></svg>
        </div>
        <div className="flex items-center justify-center"><MdOutlineSportsSoccer size={60} /></div>
        <div className="flex items-center justify-center"><MdOutlineDirectionsCar size={60} /></div>
        <div className="flex items-center justify-center">
          <svg className="h-[60px] w-[60px]" viewBox="0 0 24 24" fill="none" stroke="currentColor" strokeWidth="2" strokeLinecap="round"><path d="M9 14.600a6.300 6.300 0 1 1 6 0" /><path d="M10 9.300l2 1.800 2-1.800M12 11v4" strokeWidth="1.500" /><path d="M8 14h8v6.300q0 .7-1 .7h-1.300L12 22l-1.700-1H9q-1 0-1-.700zm2 2v.700h4V16zm0 2.100v.700h4v-.700z" fill="currentColor" stroke="none" fillRule="evenodd" /></svg>
        </div>
        <div className="flex items-center justify-center"><MdOutlineEmojiSymbols size={60} /></div>
        <div className="flex items-center justify-center"><MdOutlinedFlag size={60} /></div>
      </div>
    </div>
  );
}

export default function App() {
  return (
    <div className="flex h-[2400px] w-[1080px] flex-col overflow-hidden bg-white font-[Inter,sans-serif]">
      <EmojiDefs />
      <StatusBar />
      <Header />
      <Chat />
      <Keyboard />
      <div className="flex h-[60px] justify-center bg-[#f6f8fa] pt-[25px]">
        <div className="h-[10px] w-[300px] rounded-full bg-[#636363]" />
      </div>
    </div>
  );
}
